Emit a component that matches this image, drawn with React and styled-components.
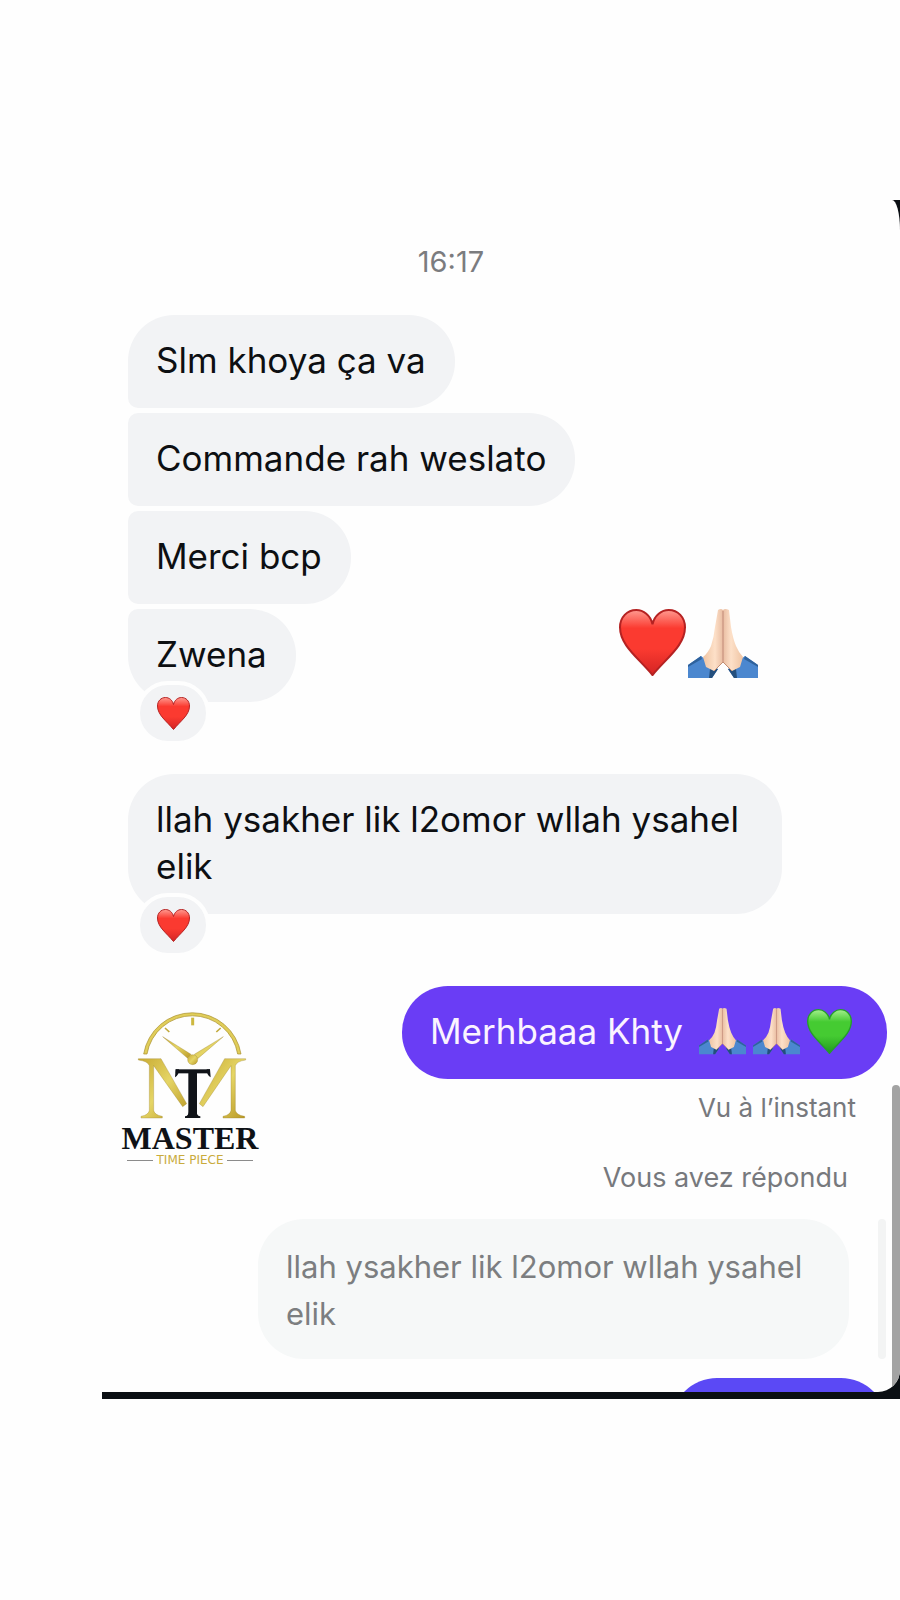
import React, { useId } from "react";
import styled, { createGlobalStyle } from "styled-components";

const GlobalStyle = createGlobalStyle`
  * { box-sizing: border-box; }
  body { margin: 0; background: #fefefe; }
`;

const Page = styled.main`
  min-height: 100vh;
  padding: 200px 0 200px 102px;
  background: #fefefe;
  font-family: Inter, "Liberation Sans", sans-serif;
`;

const Phone = styled.div`
  background: #0b0f13;
  padding-bottom: 7px;
`;

const Screen = styled.section`
  position: relative;
  overflow: hidden;
  display: flex;
  flex-direction: column;
  padding-top: 44px;
  background: #fefefe;
  border-radius: 0 8px 22px 0 / 0 30px 22px 0;
`;

const Time = styled.time`
  align-self: stretch;
  padding-right: 100px;
  margin-bottom: 35px;
  text-align: center;
  font-size: 29px;
  line-height: 36px;
  color: #7b7c7f;
`;

const Thread = styled.div`
  display: flex;
  flex-direction: column;
  gap: 5px;
  padding-left: 26px;
`;

const Row = styled.div`
  display: flex;
  align-items: flex-start;
  justify-content: space-between;
  padding-right: ${(p) => p.$end || 0}px;
  margin-top: ${(p) => p.$space || 0}px;
`;

const radii = {
  first: "46px 46px 46px 10px",
  middle: "10px 46px 46px 10px",
  last: "10px 46px 46px 46px",
  single: "46px",
};

const Bubble = styled.div`
  position: relative;
  width: fit-content;
  max-width: 654px;
  padding: 22px 29px 24px 28px;
  border-radius: ${(p) => radii[p.$shape]};
  background: #f2f3f5;
  color: #0d0f12;
  font-size: 35px;
  line-height: 47px;
`;

const Reaction = styled.span`
  position: absolute;
  left: 8px;
  bottom: -43px;
  display: flex;
  align-items: center;
  justify-content: center;
  width: 74px;
  height: 64px;
  border: 4px solid #fefefe;
  border-radius: 32px;
  background: #f2f3f5;
`;

const Sticker = styled.div`
  display: flex;
  gap: 2px;
`;

const ReplyRow = styled.div`
  display: flex;
  justify-content: space-between;
  align-items: flex-start;
  padding: 0 13px 0 19px;
  margin-top: 72px;
`;

const Outgoing = styled.div`
  display: flex;
  flex-direction: column;
  align-items: flex-end;
`;

const SentBubble = styled(Bubble)`
  display: flex;
  align-items: center;
  background: #6a3df5;
  color: #fbf3ff;
  padding-right: 35px;
`;

const Emojis = styled.span`
  display: flex;
  align-items: center;
  gap: 7px;
  margin-left: 16px;
`;

const Note = styled.p`
  margin: ${(p) => p.$top}px ${(p) => p.$right}px 0 0;
  font-size: ${(p) => p.$size}px;
  line-height: 32px;
  color: #77797d;
`;

const QuoteRow = styled.div`
  display: flex;
  justify-content: flex-end;
  gap: 29px;
  padding-right: 14px;
  margin-top: 25px;
`;

const Quote = styled(Bubble)`
  width: 591px;
  padding: 24px 29px 22px 28px;
  background: #f6f8f8;
  color: #7c7e80;
  font-size: 31px;
`;

const QuoteMark = styled.span`
  width: 8px;
  border-radius: 4px;
  background: #f3f4f4;
`;

const NextMessage = styled.div`
  align-self: flex-end;
  width: 216px;
  height: 14px;
  margin: 19px 13px 0 0;
  overflow: hidden;

  &::before {
    content: "";
    display: block;
    height: 92px;
    border-radius: 46px;
    background: #5b49f5;
  }
`;

const Scrollbar = styled.span`
  position: absolute;
  top: 885px;
  right: 0;
  bottom: 0;
  width: 8px;
  border-radius: 4px 4px 0 0;
  background: #a3a3a3;
`;

const Brand = styled.div`
  display: flex;
  flex-direction: column;
  align-items: center;
  width: 138px;
  margin-top: 25px;
`;

const BrandName = styled.strong`
  margin-top: 1px;
  font-family: "Liberation Serif", serif;
  font-size: 32px;
  line-height: 32px;
  color: #0f1216;
`;

const BrandTag = styled.span`
  display: flex;
  align-items: center;
  align-self: stretch;
  gap: 4px;
  padding: 0 6px;
  font-family: "DejaVu Sans", sans-serif;
  font-size: 12px;
  line-height: 12px;
  color: #c9ab3c;
  white-space: nowrap;

  &::before,
  &::after {
    content: "";
    flex: 1;
    height: 1px;
    background: #8b8b8b;
  }
`;

const tones = {
  red: { light: "#ff9a90", main: "#fb3a30", low: "#d42424", edge: "#b52222" },
  green: { light: "#a4f08c", main: "#45cb32", low: "#209a20", edge: "#259d2c" },
};

function Heart({ size, tone = "red" }) {
  const id = useId();
  const c = tones[tone];
  return (
    <svg width={size} height={size} viewBox="0 0 66 66" role="img" aria-label={`${tone} heart`}>
      <defs>
        <linearGradient id={id} x1="0" y1="0" x2="0" y2="1">
          <stop offset="0" stopColor={c.light} />
          <stop offset="0.28" stopColor={c.main} />
          <stop offset="0.6" stopColor={c.main} />
          <stop offset="1" stopColor={c.low} />
        </linearGradient>
      </defs>
      <path
        d="M33 15C31 6 24 1 17 1C8 1 1 8 1 18C1 36 19 48 33 65C47 48 65 36 65 18C65 8 58 1 49 1C42 1 35 6 33 15Z"
        fill={`url(#${id})`}
        stroke={c.edge}
        strokeWidth="2"
      />
    </svg>
  );
}

function Hands({ size }) {
  const id = useId();
  return (
    <svg width={size} height={size} viewBox="0 0 70 70" role="img" aria-label="folded hands">
      <defs>
        <linearGradient id={id} x1="0" y1="0" x2="1" y2="0">
          <stop offset="0" stopColor="#efc4a3" />
          <stop offset="0.3" stopColor="#fde0c8" />
          <stop offset="0.5" stopColor="#e9bda2" />
          <stop offset="0.7" stopColor="#fde0c8" />
          <stop offset="1" stopColor="#efc4a3" />
        </linearGradient>
      </defs>
      <path d="M0 56L13 47L30 60L24 69H0Z" fill="#4b87cf" />
      <path d="M70 56L57 47L40 60L46 69H70Z" fill="#4b87cf" />
      <path d="M13 47L0 56V58L14 50ZM57 47L70 56V58L56 50Z" fill="#2f629c" />
      <path d="M22 60L30 60L24 69H21ZM48 60L40 60L46 69H49Z" fill="#244f7d" />
      <path
        d="M30 1Q33 -1 35 1Q37 -1 41 1L43 18Q45 30 48 37Q51 44 55 48L52 58L44 62L35 53L26 62L18 58L15 48Q20 44 23 37Q26 28 27 18Z"
        fill={`url(#${id})`}
      />
      <path d="M35 2V53" stroke="#c28a78" strokeWidth="1" />
      <path d="M26 62L35 53L44 62" fill="none" stroke="#c28e75" strokeWidth="1" />
    </svg>
  );
}

function WatchEmblem() {
  return (
    <svg width="138" height="110" viewBox="62 62 414 330" role="img" aria-label="Watch emblem">
      <defs>
        <linearGradient id="gold" x1="0" y1="0" x2="1" y2="1">
          <stop offset="0" stopColor="#c8aa32" />
          <stop offset="0.5" stopColor="#e5d565" />
          <stop offset="1" stopColor="#b99824" />
        </linearGradient>
      </defs>
      <path
        d="M130 191A148 148 0 0 1 422 191H412A138 138 0 0 0 140 191Z"
        fill="#e0cd59"
        stroke="#a68c2b"
        strokeWidth="2"
      />
      <path d="M277 82V105" stroke="#cdb83f" strokeWidth="9" />
      <path d="M194 113L207 125M361 113L348 125" stroke="#c2aa3c" strokeWidth="5" />
      <g fill="url(#gold)" stroke="#9a8330" strokeWidth="1">
        <path d="M187 139L272 192L262 204Z" />
        <path d="M369 139L292 205L282 192Z" />
        <circle cx="277" cy="208" r="15" />
        <path d="M114 205H182L259 340L247 349L160 226V360Q162 374 186 378V383H122V378Q145 374 147 360V226Q143 213 114 209Z" />
        <path d="M436 205H373L297 340L308 349L392 226V360Q390 374 368 378V383H433V378Q407 374 405 360V226Q409 213 436 209Z" />
      </g>
      <g fill="#101318">
        <rect x="226" y="237" width="103" height="12" />
        <rect x="264" y="240" width="26" height="140" />
        <path d="M226 237H236Q236 256 224 261ZM329 237H319Q319 256 331 261Z" />
        <path d="M254 383V378Q264 376 266 364H288Q290 376 300 378V383Z" />
      </g>
    </svg>
  );
}

export default function App() {
  return (
    <>
      <GlobalStyle />
      <Page>
        <Phone>
          <Screen>
            <Time>16:17</Time>
            <Thread>
              <Bubble $shape="first">Slm khoya ça va</Bubble>
              <Bubble $shape="middle">Commande rah weslato</Bubble>
              <Bubble $shape="middle">Merci bcp</Bubble>
              <Row $end={142}>
                <Bubble $shape="last">
                  Zwena
                  <Reaction>
                    <Heart size={33} />
                  </Reaction>
                </Bubble>
                <Sticker>
                  <Heart size={67} />
                  <Hands size={70} />
                </Sticker>
              </Row>
              <Row $space={67}>
                <Bubble $shape="single">
                  llah ysakher lik l2omor wllah ysahel elik
                  <Reaction>
                    <Heart size={33} />
                  </Reaction>
                </Bubble>
              </Row>
            </Thread>
            <ReplyRow>
              <Brand>
                <WatchEmblem />
                <BrandName>MASTER</BrandName>
                <BrandTag>TIME PIECE</BrandTag>
              </Brand>
              <Outgoing>
                <SentBubble $shape="single">
                  Merhbaaa Khty
                  <Emojis>
                    <Hands size={47} />
                    <Hands size={47} />
                    <Heart size={45} tone="green" />
                  </Emojis>
                </SentBubble>
                <Note $top={13} $right={31} $size={26}>Vu à l’instant</Note>
                <Note $top={38} $right={39} $size={27}>Vous avez répondu</Note>
              </Outgoing>
            </ReplyRow>
            <QuoteRow>
              <Quote $shape="single">llah ysakher lik l2omor wllah ysahel elik</Quote>
              <QuoteMark />
            </QuoteRow>
            <NextMessage />
            <Scrollbar />
          </Screen>
        </Phone>
      </Page>
    </>
  );
}
